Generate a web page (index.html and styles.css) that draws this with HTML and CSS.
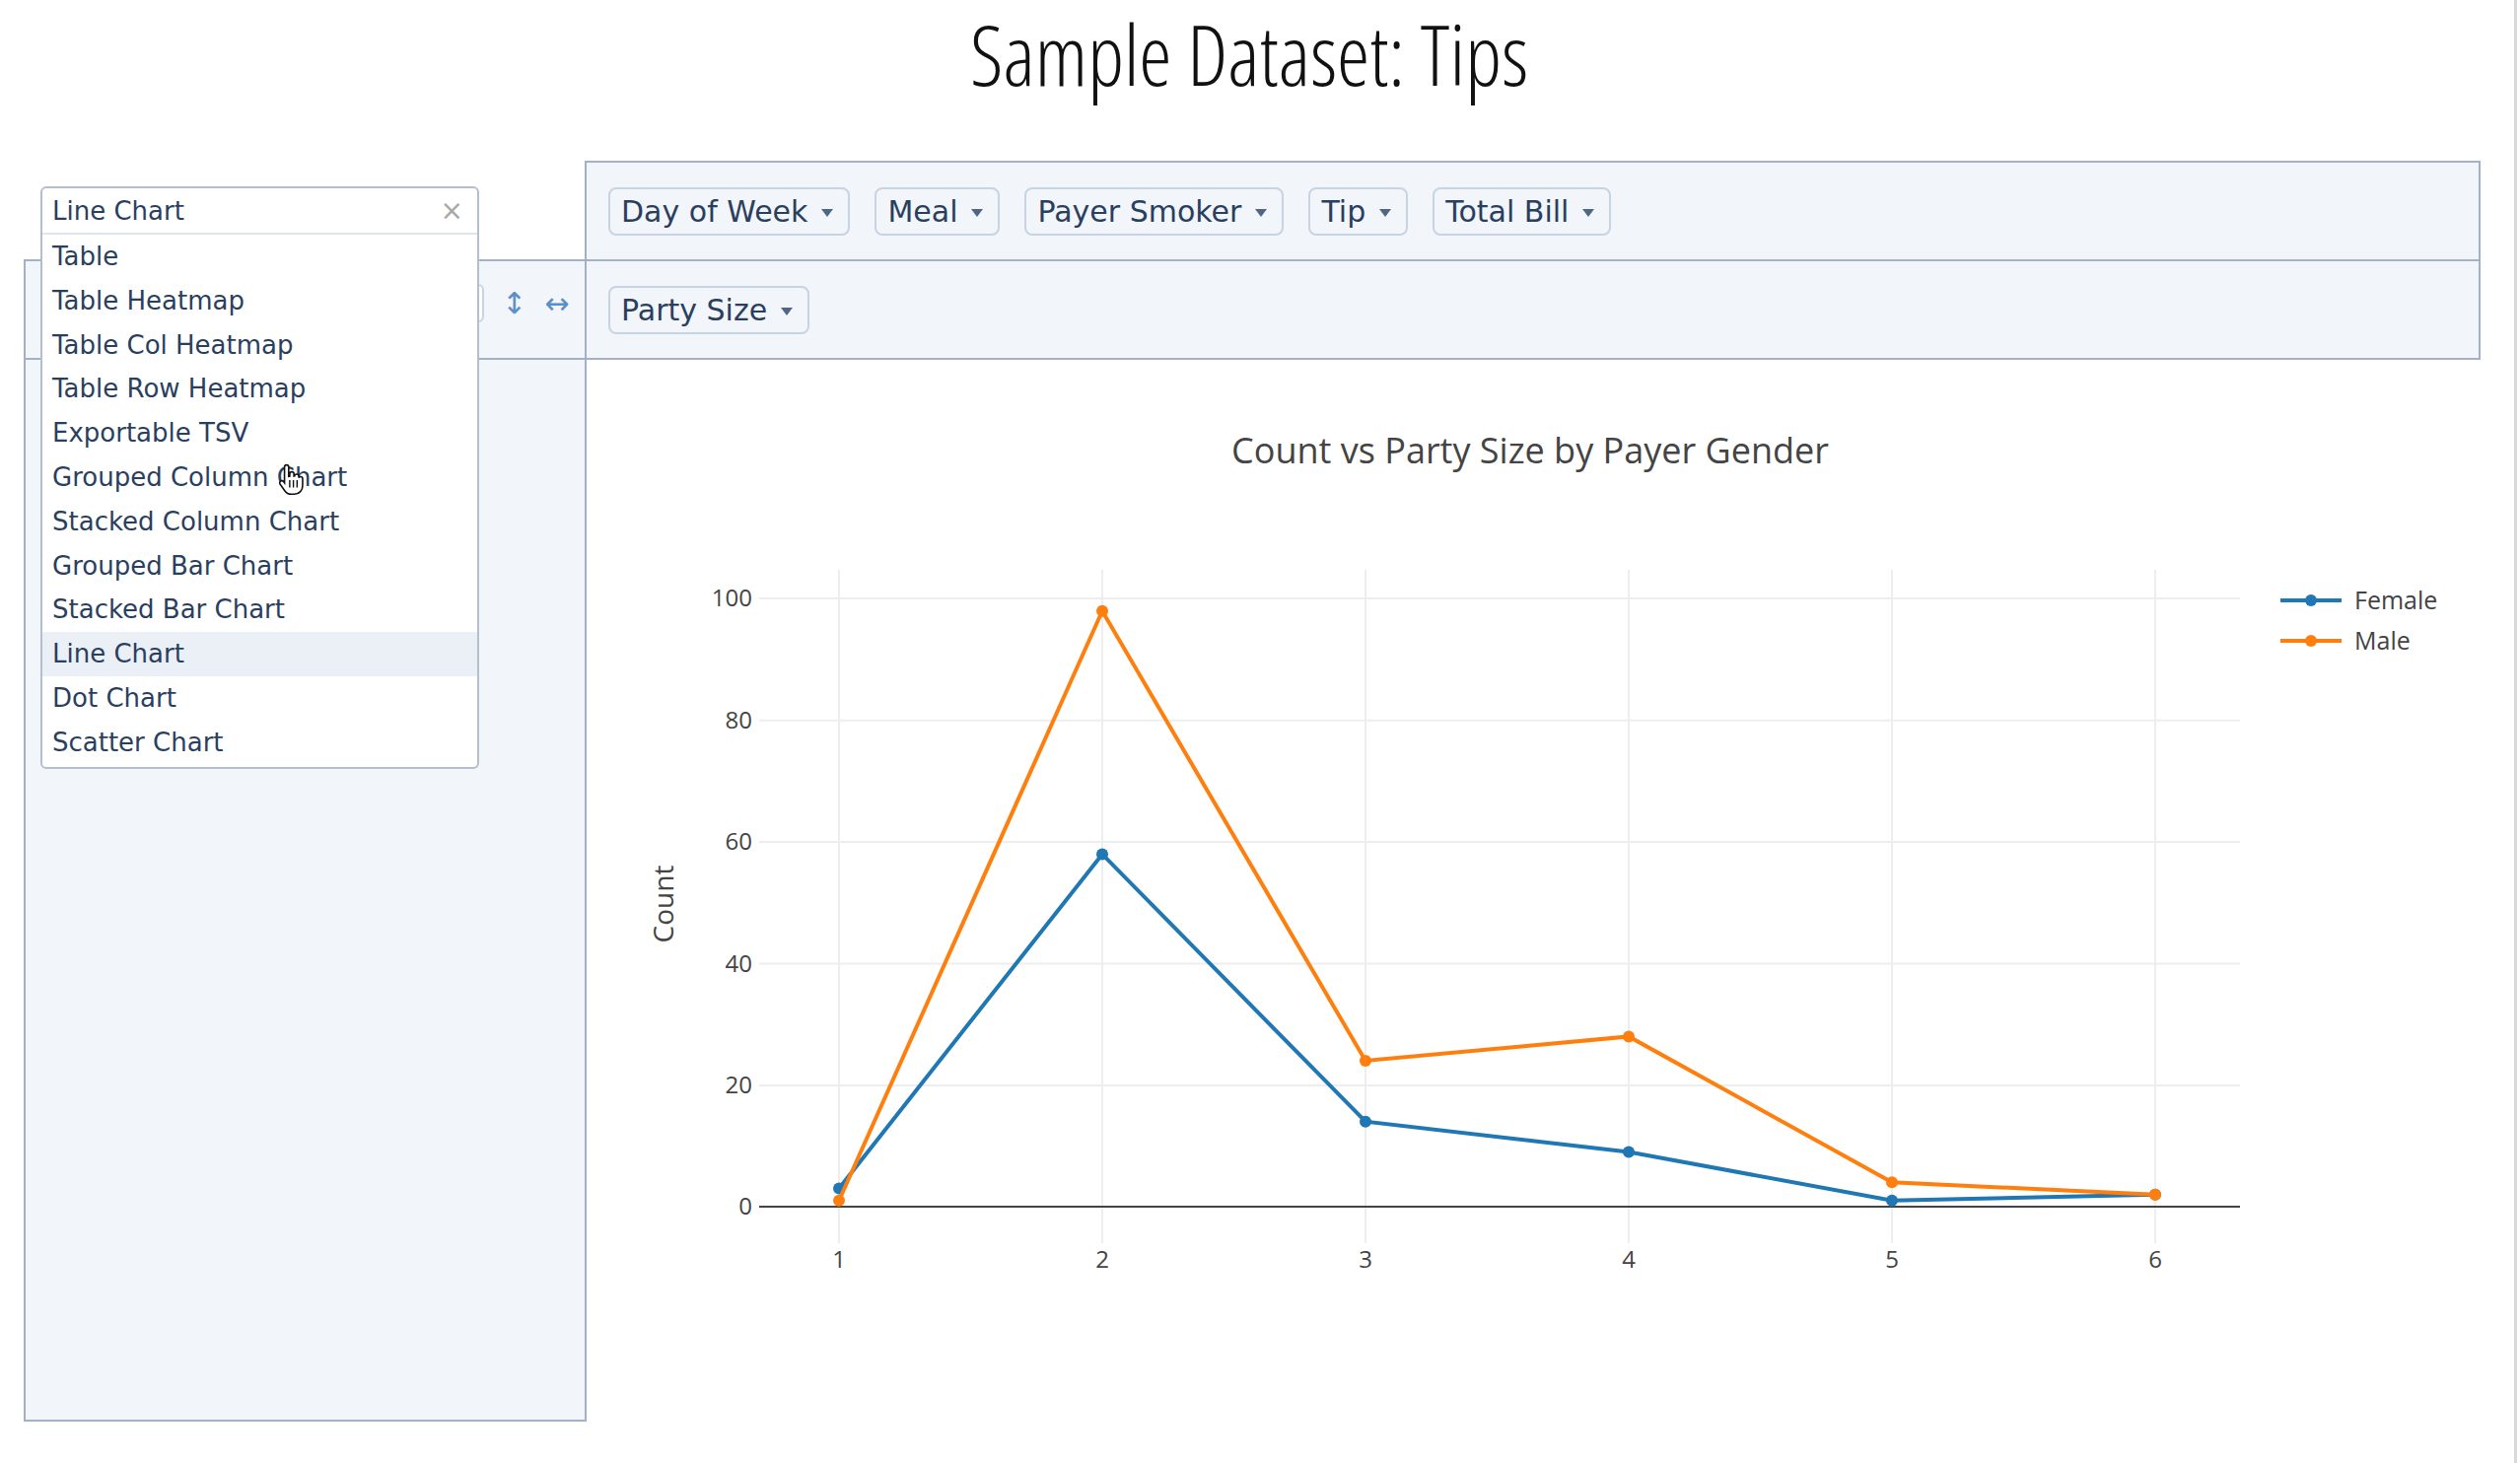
FILE: index.html
```html
<!DOCTYPE html>
<html lang="en">
<head>
  <meta charset="UTF-8">
  <title>Sample Dataset: Tips</title>
  <link rel="stylesheet" href="styles.css">
</head>
<body>
<div class="page">

<h1 class="title">Sample Dataset: Tips</h1>

<table class="pvtUi">
  <tr class="row-top">
    <td class="pvtRenderers">
      <div class="dropdown">
        <div class="dropdown-head">
          <span>Line Chart</span>
          <span class="clear">&times;</span>
        </div>
        <ul class="dropdown-list">
          <li>Table</li>
          <li>Table Heatmap</li>
          <li>Table Col Heatmap</li>
          <li>Table Row Heatmap</li>
          <li>Exportable TSV</li>
          <li>Grouped Column Chart</li>
          <li>Stacked Column Chart</li>
          <li>Grouped Bar Chart</li>
          <li>Stacked Bar Chart</li>
          <li class="selected">Line Chart</li>
          <li>Dot Chart</li>
          <li>Scatter Chart</li>
        </ul>
        <svg class="cursor" width="28" height="34" viewBox="0 0 26 32">
          <path d="M8 2.5c1.2 0 2 .9 2 2v9l1-.2V11c0-1.1.9-1.9 2-1.9s2 .8 2 1.9v2.2l.6-.1c0-1 .9-1.8 2-1.8s2 .8 2 1.9v1.5c.3-.7 1-1.1 1.8-1.1 1.1 0 1.9.8 1.9 1.9v6.6c0 4.4-3 8.3-7.8 8.3h-3.2c-2.7 0-4.6-1.3-6.1-3.4L1.9 21c-.8-1-.6-2.3.3-3 .9-.7 2.2-.5 2.9.4L6 19.6V4.5c0-1.1.8-2 2-2z" fill="#fff" stroke="#111" stroke-width="1.5"/>
          <path d="M11 17v7M14.5 17v7M18 17v7" stroke="#111" stroke-width="1.3"/>
        </svg>
      </div>
    </td>
    <td class="pvtAxisContainer pvtUnused">
      <div class="attrs">
        <span class="pvtAttr">Day of Week <span class="caret"></span></span>
        <span class="pvtAttr">Meal <span class="caret"></span></span>
        <span class="pvtAttr">Payer Smoker <span class="caret"></span></span>
        <span class="pvtAttr">Tip <span class="caret"></span></span>
        <span class="pvtAttr">Total Bill <span class="caret"></span></span>
      </div>
    </td>
  </tr>
  <tr class="row-mid">
    <td class="pvtVals">
      <div class="vals">
        <span class="aggSelect"></span>
        <span class="order">&#x2195;</span>
        <span class="order">&#x2194;</span>
      </div>
    </td>
    <td class="pvtAxisContainer pvtCols">
      <div class="attrs">
        <span class="pvtAttr">Party Size <span class="caret"></span></span>
      </div>
    </td>
  </tr>
  <tr class="row-bottom">
    <td class="pvtAxisContainer pvtRows"></td>
    <td class="pvtOutput">
      <svg class="chart" width="1920" height="1076" viewBox="595 364 1920 1076">
        <text class="chart-title" x="1552" y="469" text-anchor="middle">Count vs Party Size by Payer Gender</text>

        <g class="grid">
          <line x1="851" y1="577" x2="851" y2="1260"/>
          <line x1="1118" y1="577" x2="1118" y2="1260"/>
          <line x1="1385" y1="577" x2="1385" y2="1260"/>
          <line x1="1652" y1="577" x2="1652" y2="1260"/>
          <line x1="1919" y1="577" x2="1919" y2="1260"/>
          <line x1="2186" y1="577" x2="2186" y2="1260"/>
          <line x1="770" y1="606" x2="2272" y2="606"/>
          <line x1="770" y1="729.7" x2="2272" y2="729.7"/>
          <line x1="770" y1="853" x2="2272" y2="853"/>
          <line x1="770" y1="976.6" x2="2272" y2="976.6"/>
          <line x1="770" y1="1100" x2="2272" y2="1100"/>
        </g>
        <line class="zero" x1="770" y1="1223" x2="2272" y2="1223"/>

        <g class="ticks ytick" text-anchor="end">
          <text x="763" y="614">100</text>
          <text x="763" y="738">80</text>
          <text x="763" y="861">60</text>
          <text x="763" y="985">40</text>
          <text x="763" y="1108">20</text>
          <text x="763" y="1231">0</text>
        </g>
        <g class="ticks xtick" text-anchor="middle">
          <text x="851" y="1285">1</text>
          <text x="1118" y="1285">2</text>
          <text x="1385" y="1285">3</text>
          <text x="1652" y="1285">4</text>
          <text x="1919" y="1285">5</text>
          <text x="2186" y="1285">6</text>
        </g>
        <text class="axis-title" transform="translate(683 916) rotate(-90)" text-anchor="middle">Count</text>

        <g class="trace female">
          <polyline points="851,1204.5 1118,865.4 1385,1136.7 1652,1167.5 1919,1216.8 2186,1210.7"/>
          <circle cx="851" cy="1204.5" r="6"/>
          <circle cx="1118" cy="865.4" r="6"/>
          <circle cx="1385" cy="1136.7" r="6"/>
          <circle cx="1652" cy="1167.5" r="6"/>
          <circle cx="1919" cy="1216.8" r="6"/>
          <circle cx="2186" cy="1210.7" r="6"/>
        </g>
        <g class="trace male">
          <polyline points="851,1216.8 1118,618.8 1385,1075 1652,1050.4 1919,1198.3 2186,1210.7"/>
          <circle cx="851" cy="1216.8" r="6"/>
          <circle cx="1118" cy="618.8" r="6"/>
          <circle cx="1385" cy="1075" r="6"/>
          <circle cx="1652" cy="1050.4" r="6"/>
          <circle cx="1919" cy="1198.3" r="6"/>
          <circle cx="2186" cy="1210.7" r="6"/>
        </g>

        <g class="legend">
          <g class="trace female">
            <line x1="2313" y1="608" x2="2375" y2="608"/>
            <circle cx="2344" cy="608" r="6"/>
          </g>
          <text x="2388" y="617">Female</text>
          <g class="trace male">
            <line x1="2313" y1="649" x2="2375" y2="649"/>
            <circle cx="2344" cy="649" r="6"/>
          </g>
          <text x="2388" y="658">Male</text>
        </g>
      </svg>
    </td>
  </tr>
</table>

</div>
</body>
</html>
```

FILE: styles.css
```css
body {
  margin: 0;
  background-color: #fff;
  font-family: "DejaVu Sans", Verdana, sans-serif;
  color: #2a3f5f;
}
.page {
  width: 2553px;
  min-height: 1484px;
  border-right: 3px solid #d9d9d9;
  box-sizing: border-box;
}
.title {
  margin: 0;
  height: 163px;
  padding-top: 2px;
  box-sizing: border-box;
  text-align: center;
  font-family: "Open Sans", sans-serif;
  font-weight: 300;
  font-stretch: 75%;
  font-size: 84px;
  line-height: 1.25;
  color: #111;
  padding-right: 16px;
}

.pvtUi {
  margin-left: 24px;
  border-collapse: collapse;
}
.pvtUi td {
  padding: 0;
  vertical-align: middle;
}
.row-top td, .row-mid td {
  height: 98px;
}
.row-bottom td {
  height: 1075px;
  vertical-align: top;
}
.pvtRenderers {
  width: 568px;
  position: relative;
  vertical-align: top !important;
}
.pvtAxisContainer, .pvtVals {
  border: 2px solid #a2b1c6;
  background-color: #f2f5fa;
}
.pvtUnused, .pvtCols {
  width: 1919px;
}
.pvtOutput {
  background-color: #fff;
}

.attrs {
  display: flex;
  gap: 25px;
  padding-left: 22px;
}
.pvtAttr {
  display: inline-flex;
  align-items: center;
  gap: 14px;
  height: 49px;
  box-sizing: border-box;
  padding: 0 15px 0 11px;
  border: 2px solid #c8d4e3;
  border-radius: 8px;
  background-color: #f2f5fa;
  font-size: 30px;
  color: #2a3f5f;
  white-space: nowrap;
}
.caret {
  width: 0;
  height: 0;
  border-left: 6px solid transparent;
  border-right: 6px solid transparent;
  border-top: 8px solid #506784;
  margin-top: 3px;
}

.vals {
  display: flex;
  align-items: center;
  padding-left: 16px;
  margin-top: -14px;
}
.aggSelect {
  width: 449px;
  height: 39px;
  border: 2px solid #c8d4e3;
  border-radius: 6px;
  background: #fff;
  box-sizing: border-box;
}
.order {
  color: #5b8fc9;
  font-size: 30px;
  margin-left: 18px;
}

.dropdown {
  position: absolute;
  left: 16px;
  top: 25px;
  width: 445px;
  background: #fff;
  border: 2px solid #b4bfce;
  border-radius: 6px;
  box-sizing: border-box;
  z-index: 5;
  font-size: 26px;
}
.dropdown-head {
  display: flex;
  justify-content: space-between;
  align-items: center;
  height: 45px;
  padding: 0 14px 0 10px;
  border-bottom: 2px solid #dfe5ee;
}
.clear {
  color: #a8a8a8;
  font-size: 28px;
}
.dropdown-list {
  list-style: none;
  margin: 0;
  padding: 0 0 2px 0;
}
.dropdown-list li {
  height: 44.8px;
  line-height: 44.8px;
  padding-left: 10px;
}
.dropdown-list li.selected {
  background-color: #ebeff6;
}
.cursor {
  position: absolute;
  left: 239px;
  top: 278px;
}

.chart {
  display: block;
  font-family: "Open Sans", sans-serif;
}
.chart-title {
  font-size: 36px;
  fill: #444;
}
.grid line {
  stroke: #eeeeee;
  stroke-width: 2;
}
.zero {
  stroke: #444;
  stroke-width: 2;
}
.ticks text {
  font-size: 24px;
  fill: #444;
}
.axis-title {
  font-size: 28px;
  fill: #444;
}
.trace polyline, .trace line {
  fill: none;
  stroke-width: 4;
}
.female polyline, .female line {
  stroke: #1f77b4;
}
.female circle {
  fill: #1f77b4;
}
.male polyline, .male line {
  stroke: #ff7f0e;
}
.male circle {
  fill: #ff7f0e;
}
.legend text {
  font-size: 25px;
  fill: #444;
}
```
